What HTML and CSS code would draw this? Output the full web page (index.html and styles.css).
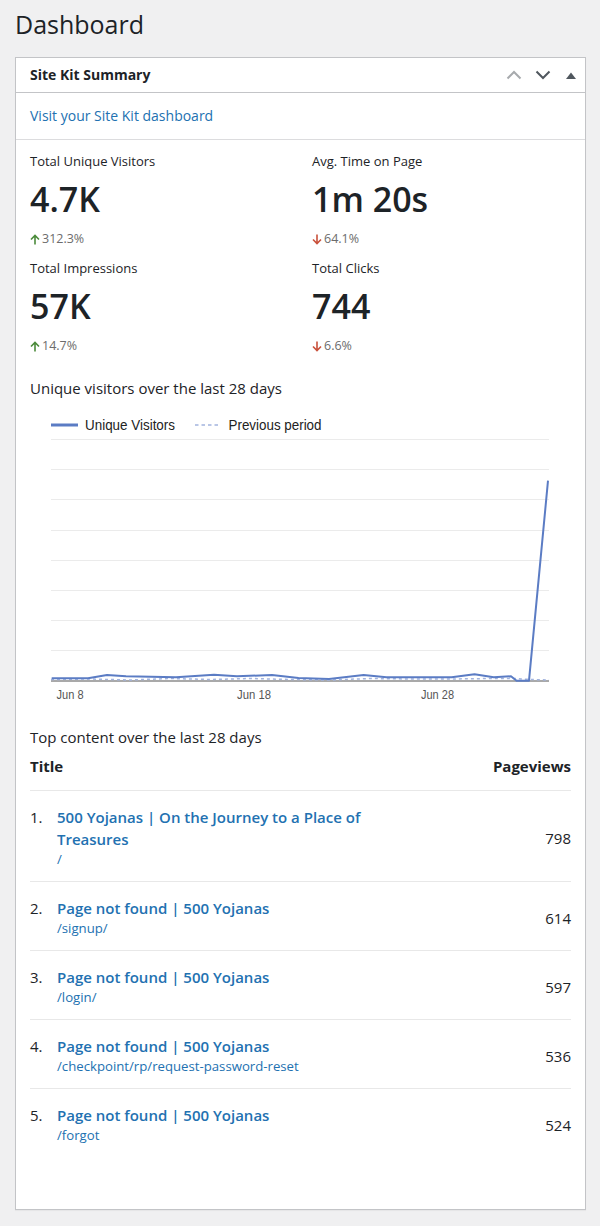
FILE: index.html
```html
<!DOCTYPE html>
<html lang="en">
<head>
<meta charset="utf-8">
<title>Dashboard</title>
<link rel="stylesheet" href="styles.css">
</head>
<body>
<div class="wrap">
  <h1 class="page-title">Dashboard</h1>
  <div class="postbox">
    <div class="postbox-header">
      <h2 class="hndle">Site Kit Summary</h2>
      <div class="handle-actions">
        <span class="handle-btn"><svg width="16" height="10" viewBox="0 0 16 10"><polyline points="1.5,8.5 8,2 14.5,8.5" fill="none" stroke="#a7aaad" stroke-width="2"/></svg></span>
        <span class="handle-btn"><svg width="16" height="10" viewBox="0 0 16 10"><polyline points="1.5,1.5 8,8 14.5,1.5" fill="none" stroke="#50575e" stroke-width="2"/></svg></span>
        <span class="handle-btn"><svg width="10" height="7" viewBox="0 0 10 7"><polygon points="0,7 5,0.5 10,7" fill="#50575e"/></svg></span>
      </div>
    </div>
    <div class="inside">
      <div class="dash-link"><a href="#">Visit your Site Kit dashboard</a></div>

      <div class="stats">
        <div class="stat">
          <div class="stat-label">Total Unique Visitors</div>
          <div class="stat-value">4.7K</div>
          <div class="stat-change"><svg class="arrow up" width="10" height="11" viewBox="0 0 10 11"><path d="M5 10.5V1.5M1 5.5L5 1.5L9 5.5" fill="none" stroke-width="1.6"/></svg>312.3%</div>
        </div>
        <div class="stat">
          <div class="stat-label">Avg. Time on Page</div>
          <div class="stat-value">1m 20s</div>
          <div class="stat-change"><svg class="arrow down" width="10" height="11" viewBox="0 0 10 11"><path d="M5 0.5V9.5M1 5.5L5 9.5L9 5.5" fill="none" stroke-width="1.6"/></svg>64.1%</div>
        </div>
        <div class="stat">
          <div class="stat-label">Total Impressions</div>
          <div class="stat-value">57K</div>
          <div class="stat-change"><svg class="arrow up" width="10" height="11" viewBox="0 0 10 11"><path d="M5 10.5V1.5M1 5.5L5 1.5L9 5.5" fill="none" stroke-width="1.6"/></svg>14.7%</div>
        </div>
        <div class="stat">
          <div class="stat-label">Total Clicks</div>
          <div class="stat-value">744</div>
          <div class="stat-change"><svg class="arrow down" width="10" height="11" viewBox="0 0 10 11"><path d="M5 0.5V9.5M1 5.5L5 9.5L9 5.5" fill="none" stroke-width="1.6"/></svg>6.6%</div>
        </div>
      </div>

      <h3 class="section-title chart-title">Unique visitors over the last 28 days</h3>
      <svg class="chart" width="541" height="295" viewBox="0 0 541 295">
        <line x1="21" y1="16" x2="48" y2="16" stroke="#5b7cc4" stroke-width="3"/>
        <text x="55" y="21" class="legend-text" textLength="90" lengthAdjust="spacingAndGlyphs">Unique Visitors</text>
        <line x1="165" y1="16" x2="189" y2="16" stroke="#a3b4de" stroke-width="1.5" stroke-dasharray="3.5,3"/>
        <text x="198.5" y="21" class="legend-text" textLength="93" lengthAdjust="spacingAndGlyphs">Previous period</text>
        <g stroke="#ebebeb" stroke-width="1">
          <line x1="21" y1="30.5" x2="519" y2="30.5"/>
          <line x1="21" y1="60.5" x2="519" y2="60.5"/>
          <line x1="21" y1="90.5" x2="519" y2="90.5"/>
          <line x1="21" y1="121.5" x2="519" y2="121.5"/>
          <line x1="21" y1="151.5" x2="519" y2="151.5"/>
          <line x1="21" y1="181.5" x2="519" y2="181.5"/>
          <line x1="21" y1="211.5" x2="519" y2="211.5"/>
          <line x1="21" y1="241.5" x2="519" y2="241.5"/>
        </g>
        <line x1="21" y1="272" x2="519" y2="272" stroke="#555" stroke-width="1.2"/>
        <polyline points="21,270.5 60,270 100,271 140,269.5 180,270.5 220,269.5 260,270.5 300,271 340,269.5 380,270 420,270 460,269.5 486,269.5 500,270.5 519,271" fill="none" stroke="#a3b4de" stroke-width="1.5" stroke-dasharray="3,3"/>
        <polyline points="21.7,269.3 58,269.3 77,266 96,267.3 146,268.3 184,265.7 207,267.3 242,266 268.5,269 299,270 333.6,266 356.5,268.3 421.6,268.3 444.5,265.3 463.7,268.3 481,267.3 486.6,271.7 499,271.7 518,71.7" fill="none" stroke="#5b7cc4" stroke-width="2" stroke-linejoin="round"/>
        <text x="26.6" y="289.5" class="axis-text" textLength="27" lengthAdjust="spacingAndGlyphs">Jun 8</text>
        <text x="207" y="289.5" class="axis-text" textLength="34" lengthAdjust="spacingAndGlyphs">Jun 18</text>
        <text x="391" y="289.5" class="axis-text" textLength="33" lengthAdjust="spacingAndGlyphs">Jun 28</text>
      </svg>

      <h3 class="section-title top-title">Top content over the last 28 days</h3>
      <table class="top-table">
        <thead>
          <tr><th class="col-title">Title</th><th class="col-views">Pageviews</th></tr>
        </thead>
        <tbody>
          <tr>
            <td class="col-title"><div class="entry"><span class="num">1.</span><div class="entry-text"><a class="entry-link" href="#">500 Yojanas | On the Journey to a Place of Treasures</a><a class="entry-path" href="#">/</a></div></div></td>
            <td class="col-views">798</td>
          </tr>
          <tr>
            <td class="col-title"><div class="entry"><span class="num">2.</span><div class="entry-text"><a class="entry-link" href="#">Page not found | 500 Yojanas</a><a class="entry-path" href="#">/signup/</a></div></div></td>
            <td class="col-views">614</td>
          </tr>
          <tr>
            <td class="col-title"><div class="entry"><span class="num">3.</span><div class="entry-text"><a class="entry-link" href="#">Page not found | 500 Yojanas</a><a class="entry-path" href="#">/login/</a></div></div></td>
            <td class="col-views">597</td>
          </tr>
          <tr>
            <td class="col-title"><div class="entry"><span class="num">4.</span><div class="entry-text"><a class="entry-link" href="#">Page not found | 500 Yojanas</a><a class="entry-path" href="#">/checkpoint/rp/request-password-reset</a></div></div></td>
            <td class="col-views">536</td>
          </tr>
          <tr>
            <td class="col-title"><div class="entry"><span class="num">5.</span><div class="entry-text"><a class="entry-link" href="#">Page not found | 500 Yojanas</a><a class="entry-path" href="#">/forgot</a></div></div></td>
            <td class="col-views">524</td>
          </tr>
        </tbody>
      </table>
    </div>
  </div>
</div>
</body>
</html>
```

FILE: styles.css
```css
html, body {
  margin: 0;
  padding: 0;
  background: #f0f0f1;
}

body {
  font-family: "Open Sans", "Noto Sans", sans-serif;
  color: #1d2327;
}

.wrap {
  padding: 0 14px 15px 15px;
}

.page-title {
  margin: 0 0 15px;
  padding-top: 7px;
  font-size: 25px;
  font-weight: 400;
  line-height: 35px;
  color: #1d2327;
}

.postbox {
  background: #fff;
  border: 1px solid #c3c4c7;
  box-shadow: 0 1px 1px rgba(0, 0, 0, 0.04);
}

.postbox-header {
  display: flex;
  align-items: center;
  justify-content: space-between;
  height: 34px;
  padding-left: 14px;
  border-bottom: 1px solid #c3c4c7;
}

.hndle {
  margin: 0;
  font-size: 14px;
  font-weight: 700;
  line-height: 22px;
}

.handle-actions {
  display: flex;
  height: 100%;
}

.handle-btn {
  display: flex;
  align-items: center;
  justify-content: center;
  width: 29px;
  height: 100%;
}

.handle-btn:last-child {
  width: 28px;
}

.inside {
  padding-bottom: 52px;
}

.dash-link {
  padding: 12px 14px;
  line-height: 22px;
  font-size: 14px;
  border-bottom: 1px solid #dcdcde;
}

a {
  color: #2271b1;
  text-decoration: none;
}

.stats {
  display: grid;
  grid-template-columns: 1fr 1fr;
  column-gap: 23px;
  row-gap: 10px;
  padding: 11px 14px 0;
}

.stat-label {
  font-size: 13px;
  line-height: 20px;
}

.stat-value {
  margin-top: 5px;
  font-size: 34px;
  font-weight: 600;
  line-height: 46px;
  color: #1d2327;
}

.stat-change {
  display: flex;
  align-items: center;
  gap: 2px;
  margin-top: 8px;
  font-size: 12.5px;
  line-height: 18px;
  color: #6c6c6c;
}

.arrow {
  display: block;
}

.arrow.up {
  stroke: #4b8b3b;
}

.arrow.down {
  stroke: #c9513b;
}

.section-title {
  margin: 0;
  padding: 0 14px;
  font-size: 15px;
  font-weight: 400;
  line-height: 22px;
  color: #1d2327;
}

.chart-title {
  margin-top: 22px;
}

.chart {
  display: block;
  margin: 10px 14px 0;
}

.legend-text {
  font-family: "Liberation Sans", Arial, sans-serif;
  font-size: 14px;
  fill: #222;
}

.axis-text {
  font-family: "Liberation Sans", Arial, sans-serif;
  font-size: 12px;
  fill: #555;
}

.top-title {
  margin-top: 22px;
}

.top-table {
  width: calc(100% - 28px);
  margin: 7px 14px 0;
  border-collapse: collapse;
}

.top-table th {
  padding: 0 0 13px;
  font-size: 15px;
  font-weight: 700;
  line-height: 22px;
  border-bottom: 1px solid #e8e8e8;
}

.top-table th.col-title {
  text-align: left;
}

.top-table th.col-views {
  text-align: right;
}

.top-table td {
  padding: 15px 0 12px;
  vertical-align: middle;
  border-bottom: 1px solid #e8e8e8;
}

.top-table tbody tr:last-child td {
  border-bottom: none;
}

.top-table td.col-views {
  text-align: right;
  font-size: 15px;
  color: #1d2327;
}

.entry {
  display: flex;
}

.num {
  flex: 0 0 27px;
  font-size: 15px;
  line-height: 22px;
}

.entry-text {
  display: flex;
  flex-direction: column;
  align-items: flex-start;
  max-width: 330px;
}

.entry-link {
  font-size: 15px;
  font-weight: 600;
  line-height: 22px;
}

.entry-path {
  font-size: 13.2px;
  line-height: 19px;
}
```
